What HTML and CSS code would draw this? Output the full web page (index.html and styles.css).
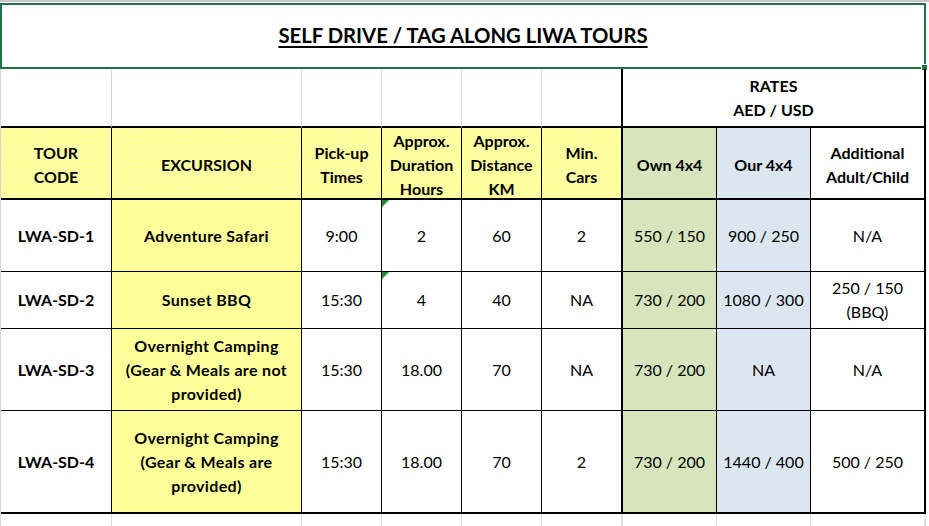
FILE: index.html
```html
<!DOCTYPE html>
<html lang="en">
<head>
<meta charset="utf-8">
<title>Self Drive / Tag Along Liwa Tours</title>
<link rel="stylesheet" href="styles.css">
</head>
<body>
<div class="topstrip"></div>
<div class="title">
  <h1>SELF DRIVE / TAG ALONG LIWA TOURS</h1>
  <span class="handle"></span>
</div>
<div class="sheet">
  <!-- row 2 -->
  <div class="c blank r2"></div>
  <div class="c blank r2"></div>
  <div class="c blank r2"></div>
  <div class="c blank r2"></div>
  <div class="c blank r2"></div>
  <div class="c blank r2 thickr"></div>
  <div class="c r2 thickr rates b">RATES<br>AED / USD</div>

  <!-- header -->
  <div class="c hd yel b">TOUR<br>CODE</div>
  <div class="c hd yel b">EXCURSION</div>
  <div class="c hd yel b">Pick-up<br>Times</div>
  <div class="c hd yel b">Approx.<br>Duration<br>Hours</div>
  <div class="c hd yel b">Approx.<br>Distance<br>KM</div>
  <div class="c hd yel b thickr">Min.<br>Cars</div>
  <div class="c hd own b">Own 4x4</div>
  <div class="c hd our b">Our 4x4</div>
  <div class="c hd b thickr">Additional<br>Adult/Child</div>

  <!-- SD-1 -->
  <div class="c b">LWA-SD-1</div>
  <div class="c exc b">Adventure Safari</div>
  <div class="c">9:00</div>
  <div class="c mark">2</div>
  <div class="c">60</div>
  <div class="c thickr">2</div>
  <div class="c own">550 / 150</div>
  <div class="c our">900 / 250</div>
  <div class="c thickr">N/A</div>

  <!-- SD-2 -->
  <div class="c b">LWA-SD-2</div>
  <div class="c exc b">Sunset BBQ</div>
  <div class="c">15:30</div>
  <div class="c mark">4</div>
  <div class="c">40</div>
  <div class="c thickr">NA</div>
  <div class="c own">730 / 200</div>
  <div class="c our">1080 / 300</div>
  <div class="c thickr">250 / 150<br>(BBQ)</div>

  <!-- SD-3 -->
  <div class="c b">LWA-SD-3</div>
  <div class="c exc b">Overnight Camping<br>(Gear &amp; Meals are not<br>provided)</div>
  <div class="c">15:30</div>
  <div class="c">18.00</div>
  <div class="c">70</div>
  <div class="c thickr">NA</div>
  <div class="c own">730 / 200</div>
  <div class="c our">NA</div>
  <div class="c thickr">N/A</div>

  <!-- SD-4 -->
  <div class="c last b">LWA-SD-4</div>
  <div class="c last exc b">Overnight Camping<br>(Gear &amp; Meals are<br>provided)</div>
  <div class="c last">15:30</div>
  <div class="c last">18.00</div>
  <div class="c last">70</div>
  <div class="c last thickr">2</div>
  <div class="c last own">730 / 200</div>
  <div class="c last our">1440 / 400</div>
  <div class="c last thickr">500 / 250</div>

  <!-- empty strip -->
  <div class="g"></div>
  <div class="g"></div>
  <div class="g"></div>
  <div class="g"></div>
  <div class="g"></div>
  <div class="g g2"></div>
  <div class="g"></div>
  <div class="g"></div>
  <div class="g g2"></div>
</div>
</body>
</html>
```
FILE: styles.css
```css
html, body {
  margin: 0;
  padding: 0;
  background: #ffffff;
}
body {
  font-family: Lato, "Open Sans", "Liberation Sans", sans-serif;
  color: #000;
  overflow: hidden;
}
.topstrip {
  height: 2px;
  width: 929px;
  background: #c6c6c6;
}
.title {
  position: relative;
  box-sizing: border-box;
  margin-top: 1px;
  width: 926px;
  height: 66px;
  border: 2px solid #217346;
  display: flex;
  align-items: center;
  justify-content: center;
}
.title h1 {
  margin: 0 0 3px 0;
  font-size: 20.3px;
  font-weight: 700;
  text-decoration: underline;
  text-decoration-thickness: 2px;
  text-underline-offset: 3px;
  letter-spacing: 0;
}
.handle {
  position: absolute;
  right: -4px;
  bottom: -4px;
  width: 5px;
  height: 5px;
  background: #217346;
  border: 1px solid #ffffff;
}
.sheet {
  display: grid;
  grid-template-columns: 111px 190px 80px 80px 80px 81px 94px 94px 115px;
  grid-template-rows: 59px 72px 72px 57px 82px 103px 12px;
  border-left: 1px solid #d4d4d4;
  width: max-content;
}
.c {
  position: relative;
  box-sizing: border-box;
  display: flex;
  align-items: center;
  justify-content: center;
  text-align: center;
  border-right: 1px solid #000;
  border-bottom: 1px solid #000;
  font-size: 16px;
  line-height: 24px;
}
.b { font-weight: 700; }
.r2 { border-bottom: 2px solid #000; }
.blank { border-right-color: #d9d9d9; }
.thickr { border-right: 2px solid #000; }
.blank.thickr { border-right: 2px solid #000; }
.rates { grid-column: span 3; }
.hd {
  border-bottom: 2px solid #000;
  padding-top: 3px;
}
.last { border-bottom: 2px solid #000; }
.yel {
  background-color: #ffff99;
  background-image: radial-gradient(circle, #ffffc4 40%, transparent 48%);
  background-size: 3px 3px;
}
.exc {
  background: #ffff99;
  letter-spacing: 0.35px;
}
.own { background: #d8e4bc; }
.our { background: #dce6f1; }
.mark::before {
  content: "";
  position: absolute;
  left: 0;
  top: 0;
  width: 0;
  height: 0;
  border-top: 7px solid #1e8a3a;
  border-right: 7px solid transparent;
}
.g {
  box-sizing: border-box;
  border-right: 1px solid #dedede;
}
.g2 { border-right: 2px solid #dedede; }
```
